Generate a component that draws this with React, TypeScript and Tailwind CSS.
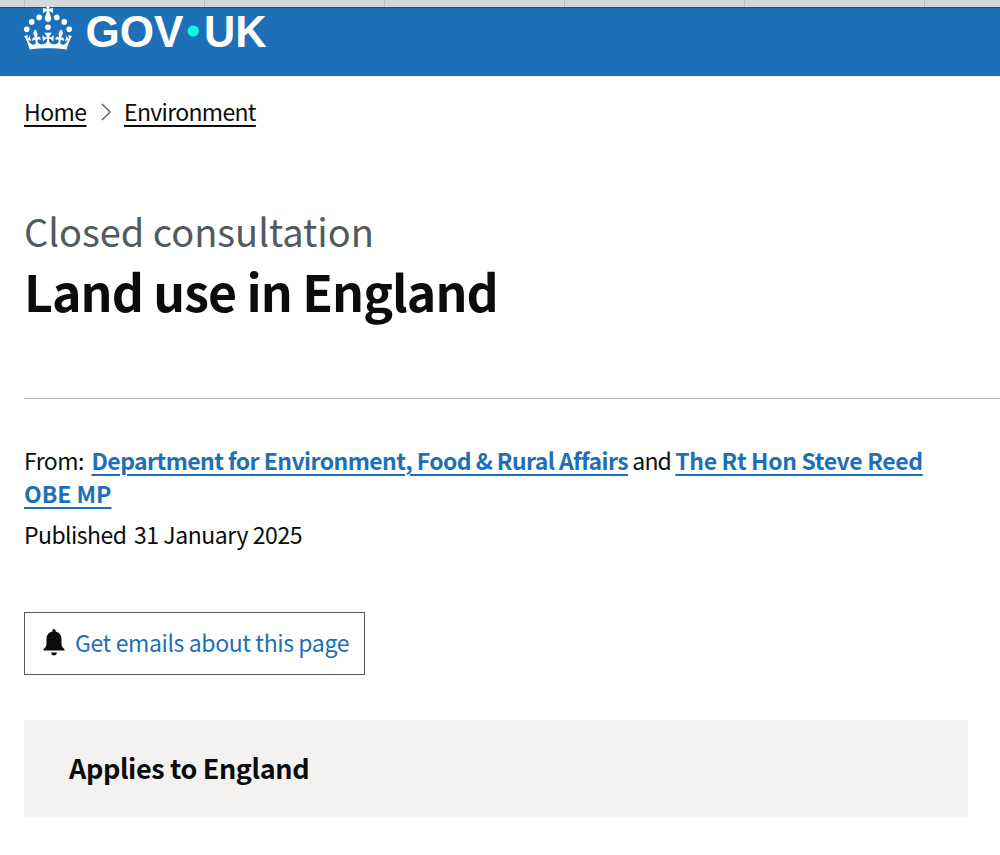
const Crown = () => (
  <g fill="#fff">
    <circle cx="20" cy="17.6" r="3.7" />
    <circle cx="10.2" cy="23.5" r="3.7" />
    <circle cx="3.7" cy="33.2" r="3.7" />
    <circle cx="31.7" cy="30.6" r="3.7" />
    <circle cx="43.3" cy="17.6" r="3.7" />
    <circle cx="53.2" cy="23.5" r="3.7" />
    <circle cx="59.7" cy="33.2" r="3.7" />
    <path d="M33.1,9.8c.2-.1.3-.3.5-.5l4.6,2.4v-6.8l-4.6,1.5c-.1-.2-.3-.3-.5-.5l1.9-5.9h-6.7l1.9,5.9c-.2.1-.3.3-.5.5l-4.6-1.5v6.8l4.6-2.4c.1.2.3.3.5.5l-2.6,8c-.9,2.8,1.2,5.7,4.1,5.7h0c3,0,5.1-2.9,4.1-5.7l-2.6-8ZM37,37.9s-3.4,3.8-4.1,6.1c2.2,0,4.2-.5,6.4-2.8l-.7,8.5c-2-2.8-4.4-4.1-5.7-3.8.1,3.1.5,6.7,5.8,7.2,3.7.3,6.7-1.5,7-3.8.4-2.6-2-4.3-3.7-1.6-1.4-4.5,2.4-6.1,4.9-3.2-1.9-4.5-1.8-7.7,2.4-10.9,3,4,2.6,7.3-1.2,11.1,2.4-1.3,6.2,0,4,4.6-1.2-2.8-3.7-2.2-4.2.2-.3,1.7.7,3.7,3,4.2,1.9.3,4.7-.9,7-5.9-1.3,0-2.4.7-3.9,1.7l2.4-8c.6,2.3,1.4,3.7,2.2,4.5.6-1.6.5-2.8,0-5.3l5,1.8c-2.6,3.6-5.2,8.7-7.3,17.5-7.4-1.1-15.7-1.7-24.5-1.7h0c-8.8,0-17.1.6-24.5,1.7-2.1-8.9-4.7-13.9-7.3-17.5l5-1.8c-.5,2.5-.6,3.7,0,5.3.8-.8,1.6-2.3,2.2-4.5l2.4,8c-1.5-1-2.6-1.7-3.9-1.7,2.3,5,5.2,6.2,7,5.9,2.3-.4,3.3-2.4,3-4.2-.5-2.4-3-3.1-4.2-.2-2.2-4.6,1.6-6,4-4.6-3.7-3.7-4.2-7.1-1.2-11.1,4.2,3.2,4.3,6.4,2.4,10.9,2.5-2.8,6.3-1.3,4.9,3.2-1.8-2.7-4.1-1-3.7,1.6.3,2.3,3.3,4.1,7,3.8,5.4-.5,5.7-4.2,5.8-7.2-1.3-.2-3.7,1-5.7,3.8l-.7-8.5c2.2,2.3,4.2,2.7,6.4,2.8-.7-2.3-4.1-6.1-4.1-6.1h10.6,0Z" />
  </g>
);

const Logo = () => (
  <svg width="250" height="56" viewBox="0 0 250 56" role="img" aria-label="GOV.UK" className="relative -mt-[1.5px] shrink-0 overflow-visible">
    <clipPath id="crown-clip">
      <rect x="-2" y="-0.3" width="60" height="56" />
    </clipPath>
    <g clipPath="url(#crown-clip)">
      <g transform="translate(0 -2.9) scale(0.757)">
        <Crown />
      </g>
    </g>
    <g fill="#fff" className="font-['Liberation_Sans',Arial,sans-serif] text-[45px] font-bold">
      <text x="61.5" y="39.7" textLength="98" lengthAdjust="spacingAndGlyphs">GOV</text>
      <text x="180" y="39.7" textLength="62.5" lengthAdjust="spacingAndGlyphs">UK</text>
    </g>
    <circle cx="169.3" cy="24" r="5.6" fill="#00ffe0" />
  </svg>
);

const Separator = () => (
  <svg width="10" height="18" viewBox="0 0 10 18" fill="none" stroke="#505a5f" strokeWidth="1.3" className="mt-px mr-[13.5px] ml-[14px]">
    <path d="M1 1l8 8-8 8" />
  </svg>
);

const Bell = () => (
  <svg width="22" height="27" viewBox="0 0 22 27" fill="#0b0c0c" className="-mt-[2px]">
    <path d="M11 0c1 0 1.6.8 1.6 1.8v.8c3.8.8 5.9 3.7 5.9 7.6v4.3c0 2.4 1 4 2.5 5.2.9.7.7 1.9-.4 1.9H1.4c-1.1 0-1.3-1.2-.4-1.9 1.500-1.200 2.500-2.800 2.500-5.200v-4.300c0-3.900 2.100-6.800 5.900-7.600v-.8C9.400.8 10 0 11 0Z" />
    <path d="M8 23.600h6c-.3 1.800-1.500 2.900-3 2.900s-2.700-1.100-3-2.900Z" />
  </svg>
);

const tabs = [1, 2, 3, 4, 5];

const link = 'underline decoration-[1.7px] underline-offset-[4px]';
const orgLink = `${link} font-bold text-[#1d70b8]`;

const App = () => {
  return (
    <div className="h-[855px] overflow-hidden bg-white font-['Noto_Sans_CJK_JP','Noto_Sans',sans-serif] text-[23px] leading-[33px] text-[#0b0c0c]">
      <div className="flex h-[7px] bg-[#d4d8dc]">
        <div className="w-[25px] border-r border-[#b9bdc1]" />
        {tabs.map((tab) => (
          <div key={tab} className="w-[180px] border-r border-[#b9bdc1]" />
        ))}
      </div>

      <header className="flex h-[69px] items-start border-t border-[#174f86] bg-[#1d70b8] pl-6">
        <Logo />
      </header>

      <nav className="flex h-[71px] items-center pl-6">
        <a className={`${link} tracking-[-0.55px]`}>Home</a>
        <Separator />
        <a className={`${link} tracking-[-0.68px]`}>Environment</a>
      </nav>

      <main className="pl-6">
        <div className="pt-[56px]">
          <span className="block text-[38px] leading-[56px] text-[#505a5f]">
            <span className="tracking-[-0.03px]">Closed consultation</span>
          </span>
          <h1 className="text-[50px] leading-[62px] font-bold">
            <span className="tracking-[-0.95px]">Land use in England</span>
          </h1>
        </div>

        <div className="mt-[77px] border-t border-[#b1b4b6] pt-[45px]">
          <p>
            <span className="mr-[7.5px] tracking-[-0.5px]">From:</span>
            <a className={`${orgLink} tracking-[-0.57px]`}>Department for Environment, Food &amp; Rural Affairs</a>
            <span className="tracking-[-0.85px]"> and </span>
            <a className={`${orgLink} tracking-[-0.35px]`}>The Rt Hon Steve Reed</a>
            <br />
            <a className={`${orgLink} tracking-[-0.05px]`}>OBE MP</a>
          </p>
          <p className="mt-2">
            <span className="mr-[7.5px] tracking-[-0.55px]">Published</span>
            <span className="tracking-[-0.43px]">31 January 2025</span>
          </p>
        </div>

        <button className="mt-[61px] flex h-[63px] w-[341px] items-center border-[1.5px] border-[#505a5f] pl-[18px] text-[#1d70b8]">
          <Bell />
          <span className="-mt-[2px] ml-2.5 tracking-[-0.38px] whitespace-nowrap">Get emails about this page</span>
        </button>

        <section className="mt-[45px] flex h-[97px] w-[944px] items-center bg-[#f3f2f1] pl-[45px]">
          <h2 className="-mt-[2px] text-[27px] font-bold">
            <span className="tracking-[-0.38px]">Applies to England</span>
          </h2>
        </section>
      </main>
    </div>
  );
};

export default App;
